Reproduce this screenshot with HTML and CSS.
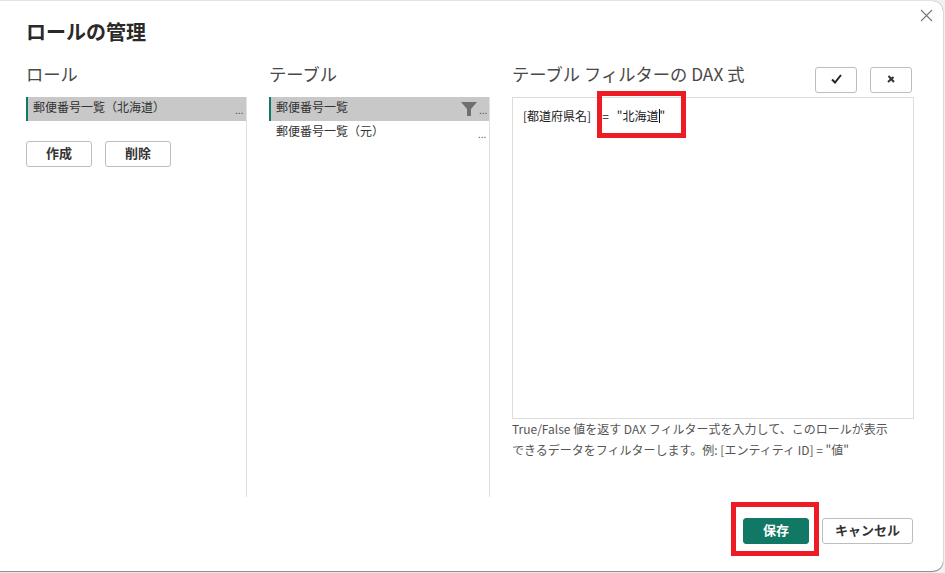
FILE: index.html
```html
<!DOCTYPE html>
<html lang="ja">
<head>
<meta charset="utf-8">
<title>ロールの管理</title>
<link rel="stylesheet" href="styles.css">
</head>
<body>
<div class="dialog">
  <button class="close" aria-label="閉じる">
    <svg width="13" height="13" viewBox="0 0 13 13"><path d="M1 1L12 12M12 1L1 12" stroke="#777" stroke-width="1.1" fill="none"/></svg>
  </button>
  <h1 class="title">ロールの管理</h1>
  <div class="columns">
    <section class="col">
      <h2 class="col-title">ロール</h2>
      <div class="list">
        <div class="row selected"><span class="row-name">郵便番号一覧（北海道）</span><span class="dots">...</span></div>
        <div class="actions">
          <button class="btn small">作成</button>
          <button class="btn small">削除</button>
        </div>
      </div>
    </section>
    <section class="col">
      <h2 class="col-title">テーブル</h2>
      <div class="list">
        <div class="row selected"><span class="row-name">郵便番号一覧</span>
          <svg class="funnel" width="16" height="14" viewBox="0 0 16 14"><path d="M0 0H16L10 7V14H6V7Z" fill="#6f6f6f"/></svg>
          <span class="dots near">...</span></div>
        <div class="row"><span class="row-name">郵便番号一覧（元）</span><span class="dots">...</span></div>
      </div>
    </section>
    <section class="col wide">
      <div class="editor-head">
        <h2 class="col-title">テーブル フィルターの DAX 式</h2>
        <div class="tools">
          <button class="btn tool" aria-label="確定">
            <svg width="11" height="10" viewBox="0 0 11 10"><path d="M1 5.5L4 8.5L10 1" stroke="#222" stroke-width="2" fill="none"/></svg>
          </button>
          <button class="btn tool" aria-label="取消">
            <svg width="8" height="8" viewBox="0 0 8 8"><path d="M1.5 1L7 7M6.5 2L1 7" stroke="#333" stroke-width="2" fill="none"/></svg>
          </button>
        </div>
      </div>
      <div class="editor">
        <div class="code"><span>[都道府県名]</span><span class="eq">=</span><span class="str">"北海道<i class="caret"></i>"</span></div>
        <div class="mark mark-code"></div>
      </div>
      <p class="hint">True/False 値を返す DAX フィルター式を入力して、このロールが表示<br>できるデータをフィルターします。例: [エンティティ ID] = "値"</p>
    </section>
  </div>
  <div class="footer">
    <div class="save-wrap">
      <button class="btn primary">保存</button>
      <div class="mark mark-save"></div>
    </div>
    <button class="btn cancel">キャンセル</button>
  </div>
</div>
</body>
</html>
```
FILE: styles.css
```css
* { box-sizing: border-box; }
html, body { margin: 0; height: 100%; }
body {
  background: #f1f1f1;
  padding-top: 1px;
  overflow: hidden;
  font-family: "Noto Sans CJK JP", "Liberation Sans", sans-serif;
  color: #252423;
}
.dialog {
  position: relative;
  width: 943px;
  height: 570px;
  background: #fff;
  border-radius: 0 10px 10px 0;
  box-shadow: 0 0 1px rgba(0,0,0,.55), 0 1px 1px rgba(0,0,0,.4);
  padding: 16px 31px 0 26px;
}
.close {
  position: absolute;
  top: 8px;
  right: 10px;
  width: 13px;
  height: 13px;
  padding: 0;
  border: 0;
  background: none;
  line-height: 0;
}
.title {
  margin: 0;
  font-size: 20px;
  font-weight: 700;
  line-height: 30px;
  color: #2b2a29;
}
.columns {
  display: flex;
  gap: 22px;
  margin-top: 13px;
  height: 450px;
}
.col { flex: none; width: 221px; display: flex; flex-direction: column; }
.col.wide { width: 402px; }
.col-title {
  margin: 0;
  font-size: 17.3px;
  font-weight: 400;
  line-height: 28px;
  height: 28px;
  color: #4a4948;
  white-space: nowrap;
}
.list {
  margin-top: 9px;
  height: 400px;
  border-right: 1px solid #e1e1e1;
}
.row {
  display: flex;
  align-items: center;
  height: 24px;
  padding: 0 0 5px 7px;
  font-size: 12px;
  color: #333;
  white-space: nowrap;
}
.row.selected {
  background: #c8c8c8;
  border-left: 2px solid #117865;
  padding-left: 5px;
}
.row-name { flex: 1; }
.dots {
  width: 11px;
  font-size: 10px;
  line-height: 12px;
  font-family: "Liberation Sans", sans-serif;
  color: #444;
  padding-top: 8px;
}
.funnel { margin: 5px 2px 0 0; }
.dots.near { width: 10px; }
.actions { display: flex; gap: 13px; margin-top: 20px; }
.btn {
  background: #fff;
  border: 1px solid #bdbdbd;
  border-radius: 3px;
  font-family: inherit;
  font-size: 13px;
  font-weight: 700;
  color: #333;
  padding: 0 0 3px;
}
.btn.small { width: 66px; height: 26px; }
.editor-head { display: flex; justify-content: space-between; align-items: flex-start; height: 37px; }
.tools { display: flex; gap: 13px; margin-top: 7px; margin-right: 2px; }
.btn.tool {
  width: 42px;
  height: 26px;
  display: flex;
  align-items: center;
  justify-content: center;
}
.editor {
  position: relative;
  height: 322px;
  border: 1px solid #dcdcdc;
  padding: 9px 10px;
}
.code {
  display: flex;
  font-size: 12px;
  line-height: 18px;
  color: #222;
  white-space: nowrap;
}
.eq { margin-left: 11px; }
.str { margin-left: 8px; }
.caret {
  display: inline-block;
  width: 1px;
  height: 14px;
  background: #111;
  vertical-align: -2px;
}
.mark {
  position: absolute;
  border: 5px solid #ed1c24;
  pointer-events: none;
}
.mark-code { left: 84px; top: -7px; width: 89px; height: 47px; }
.hint {
  margin: -1px 0 0;
  font-size: 12px;
  line-height: 21px;
  color: #555;
  white-space: nowrap;
}
.footer {
  position: relative;
  display: flex;
  justify-content: flex-end;
  gap: 13px;
  margin-top: 8px;
  margin-right: -1px;
}
.save-wrap { position: relative; }
.btn.primary {
  display: block;
  width: 66px;
  height: 26px;
  background: #117865;
  border-color: #117865;
  color: #fff;
}
.mark-save { left: -12px; top: -16px; width: 88px; height: 54px; }
.btn.cancel { width: 91px; height: 26px; }
```
